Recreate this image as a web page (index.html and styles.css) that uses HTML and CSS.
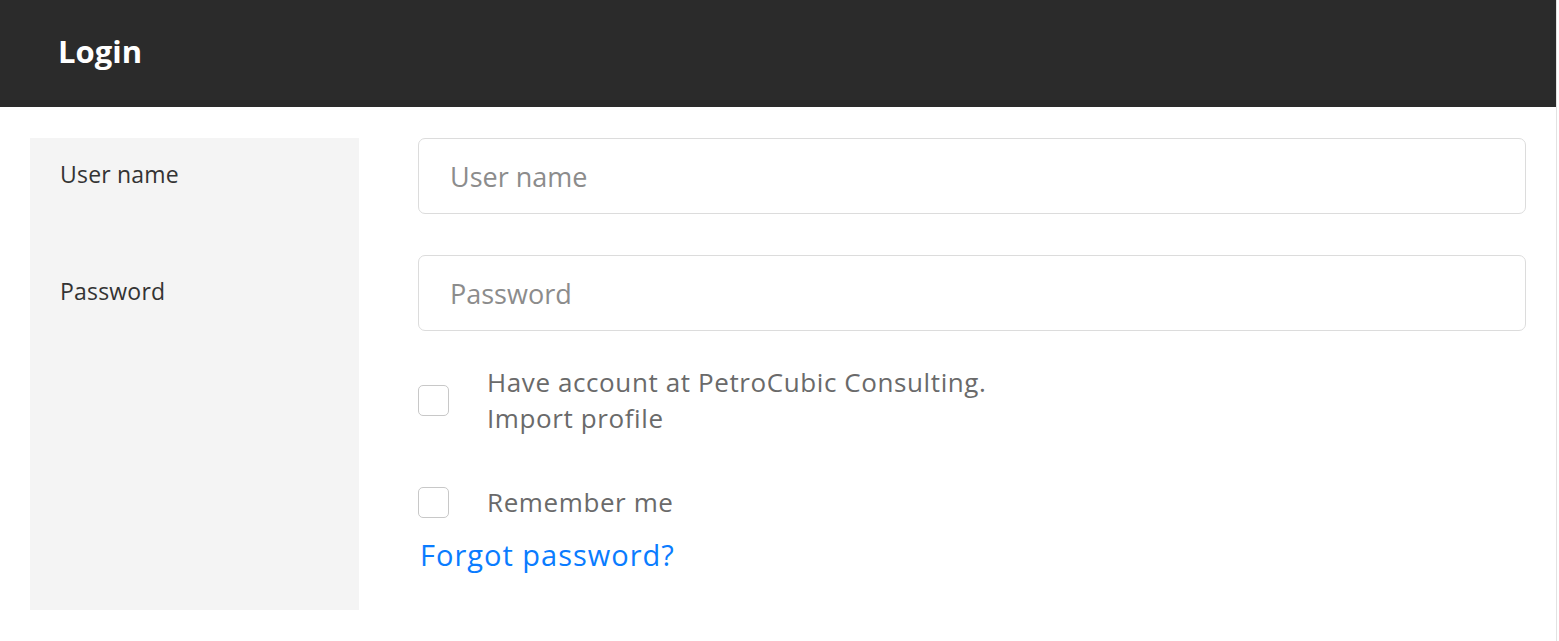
FILE: index.html
```html
<!DOCTYPE html>
<html>
<head>
<meta charset="utf-8">
<title>Login</title>
<link rel="stylesheet" href="styles.css">
</head>
<body>
<div class="page">
  <header class="topbar"><h1 class="title">Login</h1></header>
  <main class="content">
    <aside class="sidebar">
      <div class="side-row"><span class="side-label">User name</span></div>
      <div class="side-row"><span class="side-label">Password</span></div>
    </aside>
    <form class="form">
      <input class="field" type="text" placeholder="User name">
      <input class="field" type="password" placeholder="Password">
      <label class="check check-import">
        <span class="box"></span>
        <span class="check-text">Have account at PetroCubic Consulting.<br>Import profile</span>
      </label>
      <label class="check check-remember">
        <span class="box"></span>
        <span class="check-text">Remember me</span>
      </label>
      <a class="forgot" href="#">Forgot password?</a>
    </form>
  </main>
</div>
</body>
</html>
```
FILE: styles.css
```css
html, body {
  margin: 0;
  padding: 0;
  background: #ffffff;
}
body {
  font-family: "Open Sans", "Lato", sans-serif;
}
.page {
  width: 1557px;
  min-height: 641px;
  border-right: 1px solid #e2e2e2;
  box-sizing: border-box;
}
.topbar {
  height: 107px;
  background: #2b2b2b;
  display: flex;
  align-items: center;
  padding-left: 58px;
}
.title {
  margin: 0;
  color: #ffffff;
  font-size: 31px;
  font-weight: 700;
  line-height: 1;
  margin-top: -4px;
}
.content {
  display: flex;
  gap: 59px;
  padding: 31px 30px 0 30px;
}
.sidebar {
  width: 329px;
  height: 472px;
  background: #f4f4f4;
  box-sizing: border-box;
  padding-left: 30px;
  flex: none;
}
.side-row {
  height: 117px;
  box-sizing: border-box;
  padding-top: 21px;
}
.side-label {
  font-size: 23px;
  line-height: 30px;
  letter-spacing: 0.2px;
  color: #333333;
}
.form {
  width: 1108px;
  display: flex;
  flex-direction: column;
  margin: 0;
}
.field {
  height: 76px;
  box-sizing: border-box;
  border: 1px solid #dcdcdc;
  border-radius: 7px;
  padding: 0 31px;
  font-family: inherit;
  font-size: 27px;
  color: #555;
  margin: 0 0 41px 0;
  outline: none;
}
.field:last-of-type { margin-bottom: 0; }
.field::placeholder { color: #8c8c8c; }
.check {
  display: flex;
  align-items: center;
  gap: 38px;
  color: #6a6a6a;
  font-size: 26px;
  line-height: 36px;
  letter-spacing: 0.6px;
}
.check-import { margin-top: 33px; }
.check-remember { margin-top: 48px; }
.box {
  width: 31px;
  height: 31px;
  box-sizing: border-box;
  border: 1px solid #c8c8c8;
  border-radius: 5px;
  background: #fff;
  flex: none;
}
.forgot {
  margin-top: 15px;
  align-self: flex-start;
  margin-left: 2px;
  color: #0a7cff;
  text-decoration: none;
  font-size: 29px;
  line-height: 40px;
  letter-spacing: 1px;
}
```
